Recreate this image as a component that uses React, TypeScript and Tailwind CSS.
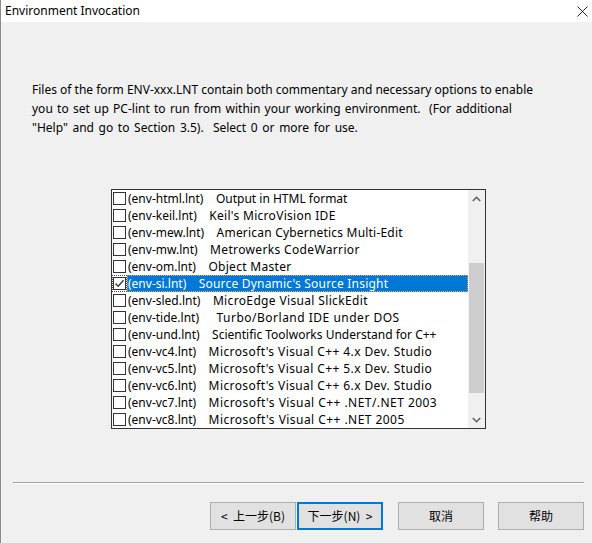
import React from 'react';

// ls = letter spacing on the description, pad = extra gap before it
const ROWS: { file: string; desc: string; ls?: number; pad?: number }[] = [
  { file: '(env-html.lnt)', desc: 'Output in HTML format' },
  { file: '(env-keil.lnt)', desc: "Keil's MicroVision IDE", ls: 0.3 },
  { file: '(env-mew.lnt)', desc: 'American Cybernetics Multi-Edit', ls: 0.2 },
  { file: '(env-mw.lnt)', desc: 'Metrowerks CodeWarrior', ls: 0.35 },
  { file: '(env-om.lnt)', desc: 'Object Master', ls: 0.3 },
  { file: '(env-si.lnt)', desc: "Source Dynamic's Source Insight", ls: 0.2 },
  { file: '(env-sled.lnt)', desc: 'MicroEdge Visual SlickEdit', ls: 0.35 },
  { file: '(env-tide.lnt)', desc: 'Turbo/Borland IDE under DOS', ls: 0.5, pad: 5 },
  { file: '(env-und.lnt)', desc: 'Scientific Toolworks Understand for C++' },
  { file: '(env-vc4.lnt)', desc: "Microsoft's Visual C++ 4.x Dev. Studio", ls: 0.4 },
  { file: '(env-vc5.lnt)', desc: "Microsoft's Visual C++ 5.x Dev. Studio", ls: 0.4 },
  { file: '(env-vc6.lnt)', desc: "Microsoft's Visual C++ 6.x Dev. Studio", ls: 0.4 },
  { file: '(env-vc7.lnt)', desc: "Microsoft's Visual C++ .NET/.NET 2003", ls: 0.45 },
  { file: '(env-vc8.lnt)', desc: "Microsoft's Visual C++ .NET 2005", ls: 0.45 },
];

const SELECTED = 5;

function CheckBox({ checked, focused }: { checked: boolean; focused: boolean }) {
  return (
    <div className={`w-[15px] h-[17px] flex items-center justify-center ${focused ? 'outline outline-1 outline-dotted outline-[#444] -outline-offset-1' : ''}`}>
      <div className="w-[13px] h-[13px] border border-[#333] bg-white flex items-center justify-center">
        {checked && (
          <svg width="11" height="11" viewBox="0 0 11 11">
            <path d="M1.5 5.5 L4.2 8.2 L9.5 2.2" fill="none" stroke="#333" strokeWidth="1.3" />
          </svg>
        )}
      </div>
    </div>
  );
}

export default function App() {
  return (
    <div
      className="w-[592px] h-[543px] bg-[#f0f0f0] border-l border-[#8a8a8a] flex flex-col text-black text-[12px]"
      style={{ fontFamily: '"Noto Sans", "Noto Sans CJK SC", sans-serif' }}
    >
      {/* Title bar */}
      <div className="h-[22px] bg-white flex items-center justify-between pl-[4px] pr-[4px] shrink-0">
        <span className="text-[12px] leading-none">Environment Invocation</span>
        <svg width="11" height="11" viewBox="0 0 11 11">
          <path d="M0.5 0.5 L10.5 10.5 M10.5 0.5 L0.5 10.5" stroke="#222" strokeWidth="1" />
        </svg>
      </div>

      {/* Description */}
      <p className="mt-[58px] pl-[31px] pr-[20px] leading-[19px] text-[12px]">
        Files of the form ENV-xxx.LNT contain both commentary and necessary options to enable
        <br />
        <span className="whitespace-pre [word-spacing:1.15px]">you to set up PC-lint to run from within your working environment.  (For additional</span>
        <br />
        <span className="whitespace-pre [word-spacing:1.5px]">"Help" and go to Section 3.5).  Select 0 or more for use.</span>
      </p>

      {/* List box */}
      <div className="mt-[52px] ml-[110px] w-[375px] h-[240px] border border-[#333] bg-white flex">
        <div className="flex-1 flex flex-col">
          {ROWS.map((r, i) => {
            const sel = i === SELECTED;
            return (
              <div key={r.file} className="h-[17px] flex items-center">
                <CheckBox checked={sel} focused={sel} />
                <div
                  className={`flex-1 h-[17px] flex items-center pl-[1px] whitespace-pre leading-none ${
                    sel ? 'bg-[#0078d7] text-white outline outline-1 outline-dotted outline-[#f2a640] -outline-offset-1' : ''
                  }`}
                >
                  <span>{r.file}    </span>
                  <span style={{ letterSpacing: r.ls ? `${r.ls}px` : undefined, marginLeft: r.pad ? `${r.pad}px` : undefined }}>
                    {r.desc}
                  </span>
                </div>
              </div>
            );
          })}
        </div>
        {/* Scrollbar */}
        <div className="w-[17px] bg-[#f0f0f0] flex flex-col">
          <div className="h-[17px] flex items-center justify-center">
            <svg width="9" height="6" viewBox="0 0 9 6">
              <path d="M0.8 5 L4.5 1.3 L8.2 5" fill="none" stroke="#606060" strokeWidth="1.6" />
            </svg>
          </div>
          <div className="mt-[56px] mx-[1px] h-[130px] bg-[#cdcdcd]" />
          <div className="flex-1" />
          <div className="h-[17px] flex items-center justify-center">
            <svg width="9" height="6" viewBox="0 0 9 6">
              <path d="M0.8 1 L4.5 4.7 L8.2 1" fill="none" stroke="#606060" strokeWidth="1.6" />
            </svg>
          </div>
        </div>
      </div>

      {/* Separator */}
      <div className="mt-[53px] ml-[12px] w-[571px] border-t border-[#a0a0a0] border-b border-b-white" />

      {/* Buttons */}
      <div className="mt-[18px] ml-[209px] flex" style={{ fontFamily: '"Noto Sans CJK SC", "Noto Sans", sans-serif' }}>
        <button className="w-[86px] h-[28px] bg-[#e1e1e1] border border-[#adadad] text-[12px] whitespace-pre">
          {'<  上一步(B)'}
        </button>
        <button className="ml-[1px] w-[86px] h-[28px] bg-[#e1e1e1] border-2 border-[#0078d7] text-[12px] whitespace-pre">
          {'下一步(N)  >'}
        </button>
        <button className="ml-[15px] w-[86px] h-[28px] bg-[#e1e1e1] border border-[#adadad] text-[12px]">
          取消
        </button>
        <button className="ml-[14px] w-[86px] h-[28px] bg-[#e1e1e1] border border-[#adadad] text-[12px]">
          帮助
        </button>
      </div>
    </div>
  );
}
